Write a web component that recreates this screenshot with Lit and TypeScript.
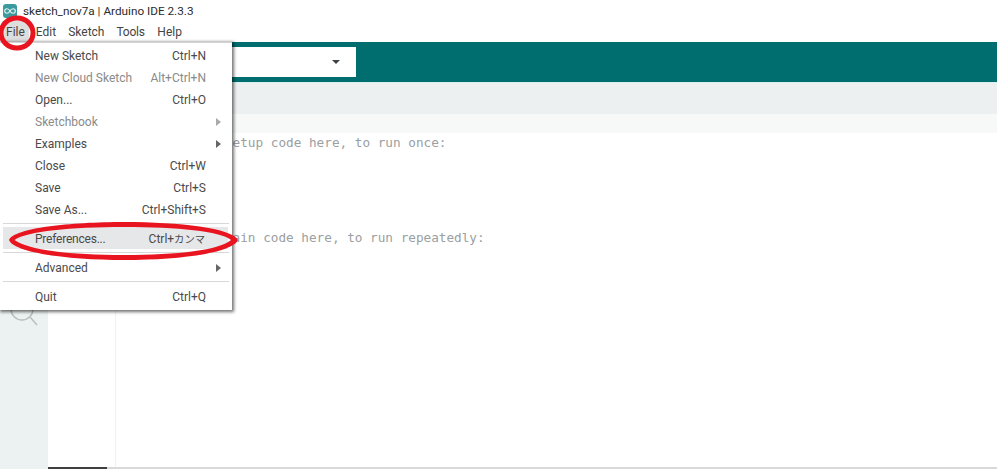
import { LitElement, html, css } from "lit";
import { customElement } from "lit/decorators.js";

type Item = { label?: string; keys?: string; kana?: string; sub?: boolean; dim?: boolean; active?: boolean; sep?: string };

const ITEMS: Item[] = [
  { label: "New Sketch", keys: "Ctrl+N" },
  { label: "New Cloud Sketch", keys: "Alt+Ctrl+N", dim: true },
  { label: "Open...", keys: "Ctrl+O" },
  { label: "Sketchbook", sub: true, dim: true },
  { label: "Examples", sub: true },
  { label: "Close", keys: "Ctrl+W" },
  { label: "Save", keys: "Ctrl+S" },
  { label: "Save As...", keys: "Ctrl+Shift+S" },
  { sep: "a" },
  { label: "Preferences...", keys: "Ctrl+", kana: "カンマ", active: true },
  { sep: "b" },
  { label: "Advanced", sub: true },
  { sep: "c" },
  { label: "Quit", keys: "Ctrl+Q" },
];

const CODE = [
  "void setup() {",
  "  // put your setup code here, to run once:",
  "",
  "}",
  "",
  "void loop() {",
  "  // put your main code here, to run repeatedly:",
  "",
  "}",
];

@customElement("app-root")
export class AppRoot extends LitElement {
  static styles = css`
    :host {
      display: block;
      position: relative;
      width: 997px;
      height: 469px;
      overflow: hidden;
      background: #fff;
      font-family: "Roboto", "Noto Sans CJK JP", sans-serif;
      font-size: 12px;
      color: #333;
    }
    .title {
      height: 21px;
      display: flex;
      align-items: center;
      gap: 6px;
      padding-left: 3px;
      color: #2b2b2b;
      font-size: 11.75px;
    }
    .logo { width: 14px; height: 14px; display: block; }
    .menubar {
      height: 21px;
      display: flex;
      align-items: center;
      padding-left: 2px;
      color: #444;
    }
    .menubar span { padding: 0 4px; height: 21px; line-height: 23px; margin-right: 4px; }
    .menubar span.on { background: #dedede; margin-right: 3px; }
    .menubar span.narrow { letter-spacing: -0.2px; margin-right: 4.500px; }
    .toolbar {
      height: 40px;
      background: #006d6f;
      display: flex;
      align-items: center;
      padding-left: 200px;
    }
    .board {
      width: 156px;
      height: 30px;
      background: #fff;
      display: flex;
      align-items: center;
      justify-content: flex-end;
      padding-right: 16px;
      box-sizing: border-box;
    }
    .caret { width: 0; height: 0; border: 4px solid transparent; border-top: 4px solid #3c4448; border-bottom: 0; }
    .body { display: flex; height: 387px; border-top: 1px solid #d8f1f0; box-sizing: border-box; }
    .side {
      width: 48px;
      background: #ecf1f1;
      flex: none;
      display: flex;
      flex-direction: column;
      align-items: center;
      padding-top: 214px;
      box-sizing: border-box;
    }
    .search { width: 28px; height: 30px; display: block; }
    .main { flex: 1; display: flex; flex-direction: column; min-width: 0; }
    .tabs { height: 31px; background: #ecf0f1; flex: none; }
    .editor { flex: 1; display: flex; min-height: 0; }
    .gutter { width: 67px; flex: none; border-right: 1px solid #f1f1f1; }
    .lines {
      flex: 1;
      font-family: "DejaVu Sans Mono", monospace;
      font-size: 12.7px;
      line-height: 19px;
      color: #9aa0a2;
      white-space: pre;
      padding-left: 2px;
    }
    .line { height: 19px; }
    .line.hl { margin-left: -69px; padding-left: 69px; background: #f7f9f9; }
    .scroll { height: 2px; flex: none; background: #d9d9d9; display: flex; }
    .scroll i { width: 59px; background: #3f3f3f; display: block; }
    .menu {
      position: absolute;
      left: 0;
      top: 42px;
      width: 232px;
      height: 268px;
      box-sizing: border-box;
      padding-top: 2px;
      background: #fff;
      border-top: 1px solid #d4d4d4;
      box-shadow: 1px 1px 3px 1px rgba(0, 0, 0, 0.55);
      color: #4a4a4a;
    }
    .row {
      height: 22px;
      line-height: 16px;
      box-sizing: border-box;
      display: flex;
      align-items: center;
      padding: 0 26px 0 35px;
      justify-content: space-between;
      position: relative;
    }
    .row.dim { color: #8a8a8a; }
    .row.narrow .label { letter-spacing: -0.22px; }
    .row.active { background: #e6e7e9; margin: 0 4px 0 3px; padding: 2px 23px 0 32px; }
    .kana { font-size: 10.3px; }
    .arrow {
      position: absolute;
      right: 11px;
      top: 7px;
      width: 0;
      height: 0;
      border: 4px solid transparent;
      border-left: 5px solid #666;
      border-right: 0;
    }
    .row.dim .arrow { border-left-color: #aaa; }
    .sep { height: 1px; background: #d8d8d8; }
    .sep.a { margin: 2px 3px 3px; }
    .sep.b { margin: 3px 3px 4px; }
    .sep.c { margin: 2px 3px 4px; }
    .marks { position: absolute; left: 0; top: 0; width: 997px; height: 469px; pointer-events: none; }
  `;

  render() {
    return html`
      <div class="title">
        <svg class="logo" viewBox="0 0 14 14">
          <rect width="14" height="14" rx="3" fill="#3a9a9e" />
          <path d="M7 7C6 5 4.800 4.800 3.900 4.800A2.200 2.200 0 0 0 3.900 9.200C4.800 9.200 6 9 7 7C8 5 9.200 4.800 10.100 4.800A2.200 2.200 0 0 1 10.100 9.200C9.200 9.200 8 9 7 7Z" fill="none" stroke="#e6f4f4" stroke-width="1.100" />
        </svg>
        <span>sketch_nov7a | Arduino IDE 2.3.3</span>
      </div>
      <div class="menubar">
        <span class="on">File</span><span>Edit</span><span>Sketch</span><span class="narrow">Tools</span><span>Help</span>
      </div>
      <div class="toolbar"><div class="board"><div class="caret"></div></div></div>
      <div class="body">
        <div class="side">
          <svg class="search" viewBox="0 0 28 30" fill="none" stroke="#b9bfc1" stroke-width="1.500">
            <circle cx="12" cy="12" r="11" />
            <path d="M20 20L27 28" />
          </svg>
        </div>
        <div class="main">
          <div class="tabs"></div>
          <div class="editor">
            <div class="gutter"></div>
            <div class="lines">${CODE.map((l, i) => html`<div class="line ${i === 0 ? "hl" : ""}">${l}</div>`)}</div>
          </div>
          <div class="scroll"><i></i></div>
        </div>
      </div>
      <div class="menu">
        ${ITEMS.map((it) =>
          it.sep
            ? html`<div class="sep ${it.sep}"></div>`
            : html`<div class="row ${it.dim ? "dim" : ""} ${it.active ? "active narrow" : ""}">
                <span class="label">${it.label}</span>
                ${it.keys ? html`<span>${it.keys}${it.kana ? html`<span class="kana">${it.kana}</span>` : ""}</span>` : ""}
                ${it.sub ? html`<i class="arrow"></i>` : ""}
              </div>`
        )}
      </div>
      <svg class="marks" viewBox="0 0 997 469">
        <ellipse cx="17" cy="33" rx="16" ry="15" fill="none" stroke="#e8141f" stroke-width="5" />
        <path
          fill="#e8141f"
          fill-rule="evenodd"
          d="M9 240C14 228 70 222 124 222C180 222 232 228 238 240C232 253 180 260 124 260C70 260 14 253 9 240Z
             M14.500 240C28 250 70 255 124 255C178 255 220 250 231 240C220 231 178 227 124 227C70 227 28 231 14.500 240Z"
        />
      </svg>
    `;
  }
}
